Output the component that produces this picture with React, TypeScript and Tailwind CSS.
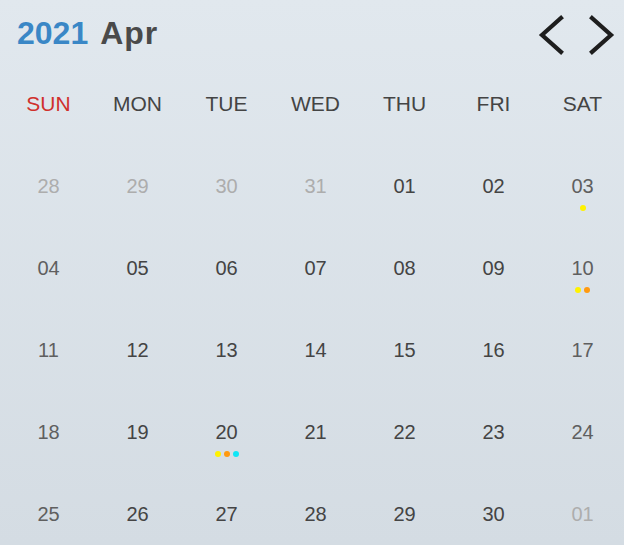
import React from 'react';

type Day = { n: string; muted?: boolean; dots?: string[] };

const YELLOW = 'bg-[#fff200]';
const ORANGE = 'bg-[#ff9a10]';
const CYAN = 'bg-[#10e6f6]';

const weekdays = ['SUN', 'MON', 'TUE', 'WED', 'THU', 'FRI', 'SAT'];

const weeks: Day[][] = [
  [
    { n: '28', muted: true },
    { n: '29', muted: true },
    { n: '30', muted: true },
    { n: '31', muted: true },
    { n: '01' },
    { n: '02' },
    { n: '03', dots: [YELLOW] },
  ],
  [
    { n: '04' },
    { n: '05' },
    { n: '06' },
    { n: '07' },
    { n: '08' },
    { n: '09' },
    { n: '10', dots: [YELLOW, ORANGE] },
  ],
  [{ n: '11' }, { n: '12' }, { n: '13' }, { n: '14' }, { n: '15' }, { n: '16' }, { n: '17' }],
  [
    { n: '18' },
    { n: '19' },
    { n: '20', dots: [YELLOW, ORANGE, CYAN] },
    { n: '21' },
    { n: '22' },
    { n: '23' },
    { n: '24' },
  ],
  [
    { n: '25' },
    { n: '26' },
    { n: '27' },
    { n: '28' },
    { n: '29' },
    { n: '30' },
    { n: '01', muted: true },
  ],
];

function Chevron({ dir }: { dir: 'left' | 'right' }) {
  const d = dir === 'left' ? 'M23 3 L4 20 L23 37' : 'M3 3 L22 20 L3 37';
  return (
    <svg width="26" height="40" viewBox="0 0 26 40" fill="none">
      <path d={d} stroke="#1e1e1e" strokeWidth="4.2" strokeLinecap="square" strokeLinejoin="miter" />
    </svg>
  );
}

export default function App() {
  return (
    <div
      className="w-[624px] h-[545px] overflow-hidden bg-gradient-to-b from-[#e1e8ee] to-[#d4dce3] text-[#444]"
      style={{ fontFamily: '"Liberation Sans", Arial, sans-serif' }}
    >
      {/* header */}
      <div className="h-[66px] flex items-center justify-between pl-[17px] pr-[9px]">
        <div className="text-[32px] leading-[32px] font-bold flex">
          <span className="text-[#3a87c6]">2021</span>
          <span className="text-[#4a4a4a] ml-[12px] tracking-[1px]">Apr</span>
        </div>
        <div className="flex items-center gap-[25px] pt-[3px]">
          <Chevron dir="left" />
          <Chevron dir="right" />
        </div>
      </div>

      {/* weekdays */}
      <div className="grid grid-cols-[repeat(7,89px)] pl-[4px] h-[79px] pt-[26px]">
        {weekdays.map((w, i) => (
          <div
            key={w}
            className={`text-center text-[21px] leading-[24px] ${i === 0 ? 'text-[#d0302c]' : 'text-[#444]'}`}
          >
            {w}
          </div>
        ))}
      </div>

      {/* days */}
      {weeks.map((week, wi) => (
        <div key={wi} className="grid grid-cols-[repeat(7,89px)] pl-[4px] h-[82px]">
          {week.map((d, di) => {
            const weekend = di === 0 || di === 6;
            const color = d.muted ? 'text-[#adadad]' : weekend ? 'text-[#5f5f5f]' : 'text-[#444]';
            return (
              <div key={di} className="flex flex-col items-center pt-[29px]">
                <div className={`text-[20px] leading-[24px] ${color}`}>{d.n}</div>
                <div className="flex gap-[3px] mt-[7px] h-[6px]">
                  {d.dots?.map((c, ci) => (
                    <span key={ci} className={`w-[6px] h-[6px] rounded-full ${c}`} />
                  ))}
                </div>
              </div>
            );
          })}
        </div>
      ))}
    </div>
  );
}
